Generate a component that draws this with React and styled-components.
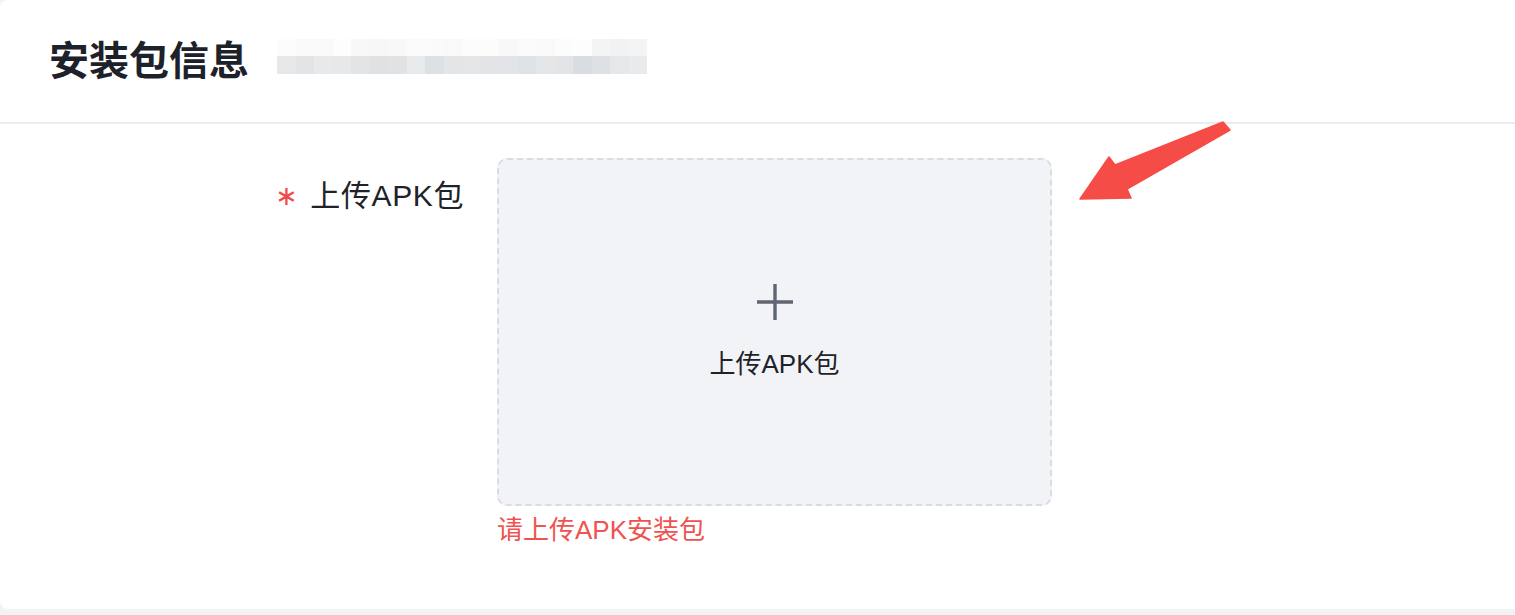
import React from "react";
import styled, { createGlobalStyle } from "styled-components";

const GlobalStyle = createGlobalStyle`
  html, body {
    margin: 0;
    padding: 0;
    overflow: hidden;
    background: #f2f3f5;
  }
  body {
    font-family: "Liberation Sans", "Noto Sans CJK SC", sans-serif;
    color: #1f2329;
  }
`;

const Card = styled.div`
  position: relative;
  width: 1530px;
  height: 609px;
  background: #fff;
  border-radius: 8px;
`;

const Header = styled.div`
  display: flex;
  align-items: center;
  gap: 28px;
  height: 122px;
  padding-left: 49px;
  border-bottom: 2px solid #ebedf0;
`;

const Title = styled.h2`
  margin: 0;
  font-size: 40px;
  font-weight: 600;
  line-height: 1;
  color: #1d2129;
`;

const Mosaic = styled.div`
  display: grid;
  grid-template-columns: repeat(20, 18.5px);
  grid-template-rows: 17px 18px;
  margin-bottom: 10px;
`;

const Pixel = styled.span`
  background: ${(p) => p.$shade};
`;

const Body = styled.div`
  padding-top: 34px;
`;

const FormRow = styled.div`
  display: flex;
  align-items: flex-start;
`;

const Label = styled.div`
  width: 464px;
  display: flex;
  justify-content: flex-end;
  align-items: center;
  margin-top: 15px;
  margin-right: 33px;
  height: 40px;
  font-size: 30px;
  letter-spacing: 0.6px;
  color: #1f2329;
`;

const Required = styled.span`
  color: #ee4b4b;
  font-family: "DejaVu Sans", sans-serif;
  font-size: 27px;
  line-height: 1;
  margin-right: 12px;
  margin-top: 4px;
`;

const Field = styled.div`
  display: flex;
  flex-direction: column;
`;

const UploadBox = styled.div`
  box-sizing: border-box;
  width: 555px;
  height: 348px;
  display: flex;
  flex-direction: column;
  align-items: center;
  justify-content: center;
  gap: 25px;
  background: #f2f3f7;
  border: 2px dashed #d9dce1;
  border-radius: 10px;
`;

const UploadText = styled.span`
  font-size: 26px;
  line-height: 36px;
  color: #1f2329;
`;

const ErrorText = styled.span`
  margin-top: 6px;
  font-size: 26px;
  line-height: 36px;
  color: #ef5350;
`;

const Annotation = styled.svg`
  position: absolute;
  left: 0;
  top: 0;
  pointer-events: none;
`;

const shadesTop = [
  "#fcfcfc", "#fafafa", "#f9f9f9", "#fdfdfd", "#f8f8f8", "#f7f7f7", "#f8f8f8", "#fbfbfb",
  "#fafafa", "#f9f9f9", "#fcfcfc", "#fcfcfb", "#f8f8f8", "#fbfbfb", "#f9f9f9", "#fcfcfc",
  "#fdfdfd", "#f3f4f4", "#f1f2f3", "#f3f4f4",
];
const shadesBottom = [
  "#e6e7e9", "#e2e4e6", "#e8e9eb", "#e7e8ea", "#e3e4e6", "#dfe1e3", "#e0e2e4", "#e9eaec",
  "#dde1e4", "#e3e5e6", "#e4e6e8", "#e3e4e6", "#e2e4e7", "#e0e3e6", "#e4e6e8", "#e2e4e6",
  "#d9dde1", "#dde1e4", "#e6e7e9", "#e9eaec",
];

const PlusIcon = () => (
  <svg width="38" height="38" viewBox="0 0 38 38">
    <path d="M19 1v36M1 19h36" stroke="#5f6572" strokeWidth="3.4" fill="none" />
  </svg>
);

const App = () => (
  <>
    <GlobalStyle />
    <Card>
      <Header>
        <Title>安装包信息</Title>
        <Mosaic aria-hidden>
          {shadesTop.map((s, i) => (
            <Pixel key={`t${i}`} $shade={s} />
          ))}
          {shadesBottom.map((s, i) => (
            <Pixel key={`b${i}`} $shade={s} />
          ))}
        </Mosaic>
      </Header>
      <Body>
        <FormRow>
          <Label>
            <Required>∗</Required>
            上传APK包
          </Label>
          <Field>
            <UploadBox>
              <PlusIcon />
              <UploadText>上传APK包</UploadText>
            </UploadBox>
            <ErrorText>请上传APK安装包</ErrorText>
          </Field>
        </FormRow>
      </Body>
      <Annotation width="1515" height="609">
        <polygon
          points="1223,122 1230,130 1127,189 1131,198 1080,199 1109,157 1115,165"
          fill="#f64c47"
          strokeLinejoin="round"
          stroke="#f64c47"
          strokeWidth="1.5"
        />
      </Annotation>
    </Card>
  </>
);

export default App;
